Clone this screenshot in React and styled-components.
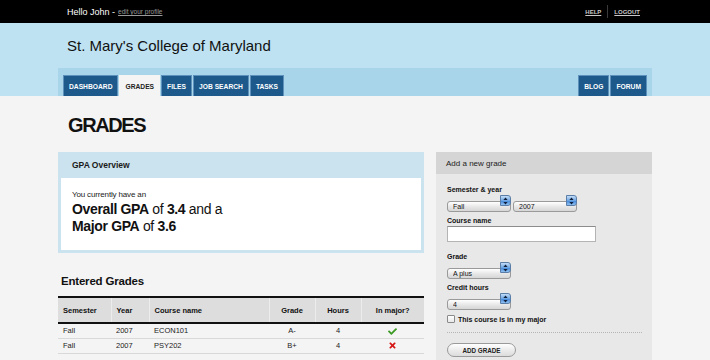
import styled, { createGlobalStyle } from 'styled-components'
import { FaCheck, FaTimes } from 'react-icons/fa'

const GRADES = [
  { semester: 'Fall', year: '2007', course: 'ECON101', grade: 'A-', hours: '4', major: true },
  { semester: 'Fall', year: '2007', course: 'PSY202', grade: 'B+', hours: '4', major: false }
]

const LEFT_TABS = ['Dashboard', 'Grades', 'Files', 'Job Search', 'Tasks']
const RIGHT_TABS = ['Blog', 'Forum']

export default function App () {
  return (
    <>
      <GlobalStyle />
      <TopBar>
        <TopInner>
          <Greeting>
            Hello John -<ProfileLink href='#'>edit your profile</ProfileLink>
          </Greeting>
          <TopLinks>
            <TopLink href='#'>HELP</TopLink>
            <TopDivider />
            <TopLink href='#'>LOGOUT</TopLink>
          </TopLinks>
        </TopInner>
      </TopBar>
      <Header>
        <HeaderInner>
          <SiteTitle>St. Mary's College of Maryland</SiteTitle>
          <NavBar>
            <TabGroup>
              {LEFT_TABS.map(tab => (
                <Tab key={tab} href='#' active={tab === 'Grades'}>{tab}</Tab>
              ))}
            </TabGroup>
            <TabGroup>
              {RIGHT_TABS.map(tab => (
                <Tab key={tab} href='#'>{tab}</Tab>
              ))}
            </TabGroup>
          </NavBar>
        </HeaderInner>
      </Header>
      <Main>
        <MainInner>
          <PageTitle>GRADES</PageTitle>
          <Columns>
            <div>
              <GpaPanel>
                <GpaHeader>GPA Overview</GpaHeader>
                <GpaBody>
                  <GpaIntro>You currently have an</GpaIntro>
                  <GpaLine><b>Overall GPA</b> of <b>3.4</b> and a</GpaLine>
                  <GpaLine><b>Major GPA</b> of <b>3.6</b></GpaLine>
                </GpaBody>
              </GpaPanel>

              <SectionTitle>Entered Grades</SectionTitle>
              <GradesTable>
                <colgroup>
                  <col style={{ width: 53 }} />
                  <col style={{ width: 38 }} />
                  <col style={{ width: 120 }} />
                  <col style={{ width: 46 }} />
                  <col style={{ width: 46 }} />
                  <col style={{ width: 63 }} />
                </colgroup>
                <thead>
                  <tr>
                    <Th>Semester</Th>
                    <Th>Year</Th>
                    <Th>Course name</Th>
                    <Th center>Grade</Th>
                    <Th center>Hours</Th>
                    <Th center>In major?</Th>
                  </tr>
                </thead>
                <tbody>
                  {GRADES.map(row => (
                    <tr key={row.course}>
                      <Td>{row.semester}</Td>
                      <Td>{row.year}</Td>
                      <Td>{row.course}</Td>
                      <Td center>{row.grade}</Td>
                      <Td center>{row.hours}</Td>
                      <Td center>
                        {row.major
                          ? <FaCheck size={9} color='#3a9a22' />
                          : <FaTimes size={9} color='#d61515' />}
                      </Td>
                    </tr>
                  ))}
                </tbody>
              </GradesTable>
            </div>

            <FormPanel>
              <FormHeader>Add a new grade</FormHeader>
              <FormBody>
                <Field>
                  <Label>Semester &amp; year</Label>
                  <SelectRow>
                    <Select value='Fall' options={['Fall', 'Spring', 'Summer']} />
                    <Select value='2007' options={['2006', '2007', '2008']} />
                  </SelectRow>
                </Field>
                <Field>
                  <Label>Course name</Label>
                  <TextInput type='text' />
                </Field>
                <Field>
                  <Label>Grade</Label>
                  <Select value='A plus' options={['A plus', 'A', 'A minus']} />
                </Field>
                <Field>
                  <Label>Credit hours</Label>
                  <Select value='4' options={['1', '2', '3', '4']} />
                </Field>
                <CheckRow>
                  <Checkbox type='checkbox' />
                  This course is in my major
                </CheckRow>
                <Dotted />
                <AddButton type='button'>ADD GRADE</AddButton>
              </FormBody>
            </FormPanel>
          </Columns>
        </MainInner>
      </Main>
    </>
  )
}

function Select ({ value, options }) {
  return (
    <SelectWrap>
      <NativeSelect defaultValue={value}>
        {options.map(o => <option key={o}>{o}</option>)}
      </NativeSelect>
      <SelectArrows>
        <svg width='5' height='8' viewBox='0 0 5 8'>
          <path d='M2.5 0.5 L4.6 3 L0.4 3 Z' fill='#10203a' />
          <path d='M2.5 7.5 L4.6 5 L0.4 5 Z' fill='#10203a' />
        </svg>
      </SelectArrows>
    </SelectWrap>
  )
}

const GlobalStyle = createGlobalStyle`
  * { box-sizing: border-box; }
  body {
    margin: 0;
    background: #f4f4f4;
    font-family: "Liberation Sans", Arial, Helvetica, sans-serif;
    color: #111;
  }
`

const TopBar = styled.div`
  background: #000;
  height: 23px;
`

const TopInner = styled.div`
  width: 594px;
  height: 100%;
  margin: 0 auto;
  padding: 0 12px 0 9px;
  display: flex;
  align-items: center;
  justify-content: space-between;
`

const Greeting = styled.div`
  color: #fff;
  font-size: 9px;
  display: flex;
  align-items: center;
`

const ProfileLink = styled.a`
  color: #9a9a9a;
  font-size: 6.5px;
  margin-left: 3px;
  text-decoration: underline;
`

const TopLinks = styled.div`
  display: flex;
  align-items: center;
  gap: 6px;
`

const TopLink = styled.a`
  color: #c8c8c8;
  font-size: 6px;
  font-weight: bold;
  text-decoration: underline;
`

const TopDivider = styled.span`
  width: 1px;
  height: 13px;
  background: #3a3a3a;
`

const Header = styled.div`
  background: #bee2f2;
`

const HeaderInner = styled.div`
  width: 594px;
  margin: 0 auto;
`

const SiteTitle = styled.h1`
  margin: 0;
  height: 45px;
  display: flex;
  align-items: center;
  padding-left: 9px;
  font-size: 15px;
  font-weight: normal;
  color: #111;
`

const NavBar = styled.div`
  height: 28px;
  background: #a9d5ea;
  padding: 0 5px 0 5px;
  display: flex;
  align-items: flex-end;
  justify-content: space-between;
`

const TabGroup = styled.div`
  display: flex;
  gap: 1px;
`

const Tab = styled.a`
  height: 21px;
  display: flex;
  align-items: center;
  padding: 0 5px;
  border: 1px solid ${({ active }) => active ? '#f4f4f4' : '#5d90bb'};
  border-bottom: none;
  background: ${({ active }) => active ? '#f4f4f4' : '#1d5a8b'};
  color: ${({ active }) => active ? '#222' : '#fff'};
  font-size: 6.7px;
  font-weight: bold;
  text-transform: uppercase;
  text-decoration: none;
`

const Main = styled.div`
  background: #f4f4f4;
`

const MainInner = styled.div`
  width: 594px;
  margin: 0 auto;
`

const PageTitle = styled.h2`
  margin: 0;
  padding: 17px 0 15px 10px;
  font-size: 20px;
  line-height: 24px;
  letter-spacing: -1.4px;
  font-weight: bold;
  color: #111;
`

const Columns = styled.div`
  display: grid;
  grid-template-columns: 366px 216px;
  gap: 12px;
  align-items: start;
`

const GpaPanel = styled.div`
  background: #cbe3ee;
  padding: 0 3px 3px;
`

const GpaHeader = styled.div`
  height: 26px;
  display: flex;
  align-items: center;
  padding-left: 11px;
  font-size: 8.5px;
  font-weight: bold;
  color: #1a1a1a;
`

const GpaBody = styled.div`
  background: #fff;
  height: 72px;
  padding: 12px 11px 0;
`

const GpaIntro = styled.div`
  font-size: 8px;
  color: #222;
  letter-spacing: -0.15px;
  margin-bottom: 2px;
`

const GpaLine = styled.div`
  font-size: 14px;
  line-height: 17px;
  letter-spacing: -0.35px;
  color: #111;
`

const SectionTitle = styled.h3`
  margin: 21px 0 8px 3px;
  font-size: 11.5px;
  line-height: 14px;
  letter-spacing: -0.2px;
  font-weight: bold;
`

const GradesTable = styled.table`
  width: 366px;
  border-collapse: collapse;
  table-layout: fixed;
  border-top: 2px solid #111;
`

const Th = styled.th`
  height: 26px;
  background: #dddddd;
  border-bottom: 2px solid #111;
  border-left: 1px solid #ececec;
  padding: 0 5px;
  font-size: 7.5px;
  font-weight: bold;
  text-align: ${({ center }) => center ? 'center' : 'left'};
  color: #111;

  &:first-child { border-left: none; }
`

const Td = styled.td`
  height: 15px;
  padding: 0 5px;
  border-bottom: 1px solid #d9d9d9;
  font-size: 7.5px;
  color: #222;
  text-align: ${({ center }) => center ? 'center' : 'left'};
  vertical-align: middle;

  svg { display: inline-block; vertical-align: middle; }
`

const FormPanel = styled.div`
  background: #e8e8e8;
  min-height: 220px;
`

const FormHeader = styled.div`
  height: 22px;
  background: #d5d5d5;
  display: flex;
  align-items: center;
  padding-left: 10px;
  font-size: 8px;
  color: #222;
`

const FormBody = styled.div`
  padding: 11px 11px 0;
  display: flex;
  flex-direction: column;
`

const Field = styled.div`
  margin-bottom: 10px;
`

const Label = styled.div`
  font-size: 7px;
  line-height: 9px;
  font-weight: bold;
  color: #111;
  margin-bottom: 1px;
`

const SelectRow = styled.div`
  display: flex;
  gap: 2px;
`

const SelectWrap = styled.div`
  position: relative;
  width: 64px;
  height: 11px;
`

const NativeSelect = styled.select`
  appearance: none;
  width: 100%;
  height: 100%;
  margin: 0;
  padding: 0 0 0 5px;
  border: 1px solid #9a9a9a;
  border-radius: 3px;
  background: linear-gradient(#ffffff, #e6e6e6 55%, #d6d6d6);
  font-family: inherit;
  font-size: 7px;
  line-height: 9px;
  color: #111;
  outline: none;
`

const SelectArrows = styled.span`
  position: absolute;
  top: 0;
  right: 0;
  width: 11px;
  height: 11px;
  border: 1px solid #5a7ea8;
  border-radius: 0 3px 3px 0;
  background: linear-gradient(#c4ddf7, #6fa6e4 50%, #3d82d6 51%, #8fc1f2);
  display: flex;
  align-items: center;
  justify-content: center;
  pointer-events: none;
`

const TextInput = styled.input`
  display: block;
  width: 149px;
  height: 16px;
  margin: 0;
  padding: 0 3px;
  border: 1px solid #b4b4b4;
  border-top-color: #8c8c8c;
  background: #fff;
  font-family: inherit;
  font-size: 7px;
`

const CheckRow = styled.label`
  display: flex;
  align-items: center;
  gap: 3px;
  margin-top: 1px;
  font-size: 7px;
  font-weight: bold;
  color: #111;
`

const Checkbox = styled.input`
  appearance: none;
  width: 8px;
  height: 8px;
  margin: 0;
  border: 1px solid #8a8a8a;
  border-radius: 1px;
  background: linear-gradient(#ffffff, #e8e8e8);
`

const Dotted = styled.div`
  margin: 9px 0 0 0;
  width: 195px;
  border-top: 1px dotted #b5b5b5;
`

const AddButton = styled.button`
  margin-top: 10px;
  width: 69px;
  height: 14px;
  padding: 0;
  border: 1px solid #9a9a9a;
  border-radius: 7px;
  background: linear-gradient(#ffffff, #ececec 50%, #dcdcdc);
  font-family: inherit;
  font-size: 6.3px;
  font-weight: bold;
  color: #222;
`
